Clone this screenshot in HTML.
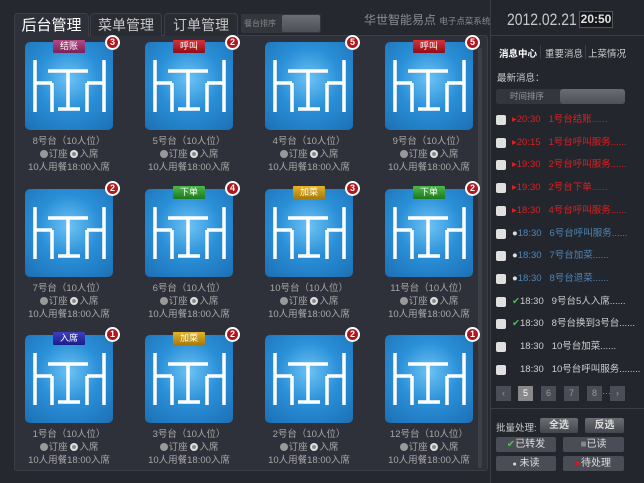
<!DOCTYPE html><html><head><meta charset="utf-8"><style>
*{margin:0;padding:0;box-sizing:border-box}
body{width:644px;height:483px;overflow:hidden;background:#26282f;font-family:"Liberation Sans","Noto Sans CJK SC",sans-serif;position:relative;color:#aaa}
.a{position:absolute}
.panel{left:14px;top:35px;width:474px;height:436px;background:#2e3139;border:1px solid #3c3f47;border-radius:3px}
.tab{top:13px;height:23px;font-size:14px;color:#c8c8c8;text-align:center;line-height:23px;background:#2a2c33;border:1px solid #3c3f47;border-bottom:none;border-radius:4px 4px 0 0}
.ic{width:88px;height:88px;border-radius:5px;background:radial-gradient(circle at 50% 42%,#6cc2f4 0%,#2a90d8 45%,#1c6fb4 100%)}
.lb{width:32px;height:13px;font-size:9px;color:#fff;text-align:center;line-height:13px;border-radius:1px}
.n{width:15px;height:15px;border-radius:50%;background:#b5141c;border:2px solid #fff;color:#fff;font-size:9px;font-weight:bold;text-align:center;line-height:11px}
.t{width:120px;text-align:center;font-size:9.5px;color:#a8a8a8;line-height:13px}
.dot{display:inline-block;width:8px;height:8px;border-radius:50%;background:#999;vertical-align:-1px;margin-right:1px}
.dot2{background:radial-gradient(circle,#888 30%,#ddd 40%)}
.right{left:490px;top:0;width:154px;height:483px;background:#23262d;border-left:1px solid #3a3d44}
.cb{width:10px;height:10px;background:#e0e0e0;border-radius:2px}
.m{font-size:9.5px;white-space:nowrap}
.red{color:#e01f1f}.blue{color:#4d86b8}.wh{color:#cfcfcf}
.pg{top:386px;width:15px;height:15px;background:#4a4d55;color:#999;font-size:9px;text-align:center;line-height:15px}
.bt{height:15px;background:linear-gradient(#6a6d73,#44474d);border-radius:2px;color:#ddd;font-size:10px;text-align:center;line-height:15px}
</style></head><body>
<div class="a panel"></div>
<div class="a tab" style="left:14px;width:75px;background:#2e3139;color:#fff;font-size:15px">后台管理</div>
<div class="a tab" style="left:90px;width:72px">菜单管理</div>
<div class="a tab" style="left:164px;width:74px">订单管理</div>
<div class="a" style="left:241px;top:14px;width:80px;height:19px;background:#33363d;border-radius:2px;font-size:8px;line-height:19px;padding-left:3px;color:#888">餐台排序</div>
<div class="a" style="left:282px;top:15px;width:38px;height:17px;background:linear-gradient(#6b6e74,#4c4f55);border-radius:2px"></div>
<div class="a" style="left:364px;top:11px;font-size:12px;color:#8a8d94;white-space:nowrap">华世智能易点 <span style="font-size:8.5px">电子点菜系统</span></div>
<div class="a" style="left:478px;top:48px;width:4px;height:420px;background:#3d4047;border-radius:2px"></div>
<svg width="0" height="0" style="position:absolute"><defs><g id="tb" stroke="#fff" stroke-width="3.5" fill="none"><path d="M10 18V70M10 41H27M27 41V70M23 29H63M43 29V67M33 67H55M79 18V70M62 41H79M62 41V70"/></g></defs></svg>

<div class="a" style="left:25px;top:42px"><div class="ic"><svg width="88" height="88"><use href="#tb"/></svg></div></div>
<div class="a" style="left:145px;top:42px"><div class="ic"><svg width="88" height="88"><use href="#tb"/></svg></div></div>
<div class="a" style="left:265px;top:42px"><div class="ic"><svg width="88" height="88"><use href="#tb"/></svg></div></div>
<div class="a" style="left:385px;top:42px"><div class="ic"><svg width="88" height="88"><use href="#tb"/></svg></div></div>
<div class="a" style="left:25px;top:189px"><div class="ic"><svg width="88" height="88"><use href="#tb"/></svg></div></div>
<div class="a" style="left:145px;top:189px"><div class="ic"><svg width="88" height="88"><use href="#tb"/></svg></div></div>
<div class="a" style="left:265px;top:189px"><div class="ic"><svg width="88" height="88"><use href="#tb"/></svg></div></div>
<div class="a" style="left:385px;top:189px"><div class="ic"><svg width="88" height="88"><use href="#tb"/></svg></div></div>
<div class="a" style="left:25px;top:335px"><div class="ic"><svg width="88" height="88"><use href="#tb"/></svg></div></div>
<div class="a" style="left:145px;top:335px"><div class="ic"><svg width="88" height="88"><use href="#tb"/></svg></div></div>
<div class="a" style="left:265px;top:335px"><div class="ic"><svg width="88" height="88"><use href="#tb"/></svg></div></div>
<div class="a" style="left:385px;top:335px"><div class="ic"><svg width="88" height="88"><use href="#tb"/></svg></div></div>

<div class="a lb" style="left:53px;top:40px;background:linear-gradient(#b44a86,#7a1f57)">结账</div>
<div class="a lb" style="left:173px;top:40px;background:linear-gradient(#d8303a,#8f0f18)">呼叫</div>
<div class="a lb" style="left:413px;top:40px;background:linear-gradient(#d8303a,#8f0f18)">呼叫</div>
<div class="a lb" style="left:173px;top:186px;background:linear-gradient(#4cb84a,#1d7a1c)">下单</div>
<div class="a lb" style="left:293px;top:186px;background:linear-gradient(#e4b52a,#a77a07)">加菜</div>
<div class="a lb" style="left:413px;top:186px;background:linear-gradient(#4cb84a,#1d7a1c)">下单</div>
<div class="a lb" style="left:53px;top:332px;background:linear-gradient(#3d3fc4,#1b1d86)">入席</div>
<div class="a lb" style="left:173px;top:332px;background:linear-gradient(#e4b52a,#a77a07)">加菜</div>

<div class="a n" style="left:105px;top:35px">3</div><div class="a n" style="left:225px;top:35px">2</div><div class="a n" style="left:345px;top:35px">5</div><div class="a n" style="left:465px;top:35px">5</div>
<div class="a n" style="left:105px;top:181px">2</div><div class="a n" style="left:225px;top:181px">4</div><div class="a n" style="left:345px;top:181px">3</div><div class="a n" style="left:465px;top:181px">2</div>
<div class="a n" style="left:105px;top:327px">1</div><div class="a n" style="left:225px;top:327px">2</div><div class="a n" style="left:345px;top:327px">2</div><div class="a n" style="left:465px;top:327px">1</div>

<div class="a t" style="left:9px;top:135px">8号台（10人位）<br><span class="dot"></span>订座 <span class="dot dot2"></span>入席<br>10人用餐18:00入席</div>
<div class="a t" style="left:129px;top:135px">5号台（10人位）<br><span class="dot"></span>订座 <span class="dot dot2"></span>入席<br>10人用餐18:00入席</div>
<div class="a t" style="left:249px;top:135px">4号台（10人位）<br><span class="dot"></span>订座 <span class="dot dot2"></span>入席<br>10人用餐18:00入席</div>
<div class="a t" style="left:369px;top:135px">9号台（10人位）<br><span class="dot"></span>订座 <span class="dot dot2"></span>入席<br>10人用餐18:00入席</div>
<div class="a t" style="left:9px;top:282px">7号台（10人位）<br><span class="dot"></span>订座 <span class="dot dot2"></span>入席<br>10人用餐18:00入席</div>
<div class="a t" style="left:129px;top:282px">6号台（10人位）<br><span class="dot"></span>订座 <span class="dot dot2"></span>入席<br>10人用餐18:00入席</div>
<div class="a t" style="left:249px;top:282px">10号台（10人位）<br><span class="dot"></span>订座 <span class="dot dot2"></span>入席<br>10人用餐18:00入席</div>
<div class="a t" style="left:369px;top:282px">11号台（10人位）<br><span class="dot"></span>订座 <span class="dot dot2"></span>入席<br>10人用餐18:00入席</div>
<div class="a t" style="left:9px;top:428px">1号台（10人位）<br><span class="dot"></span>订座 <span class="dot dot2"></span>入席<br>10人用餐18:00入席</div>
<div class="a t" style="left:129px;top:428px">3号台（10人位）<br><span class="dot"></span>订座 <span class="dot dot2"></span>入席<br>10人用餐18:00入席</div>
<div class="a t" style="left:249px;top:428px">2号台（10人位）<br><span class="dot"></span>订座 <span class="dot dot2"></span>入席<br>10人用餐18:00入席</div>
<div class="a t" style="left:369px;top:428px">12号台（10人位）<br><span class="dot"></span>订座 <span class="dot dot2"></span>入席<br>10人用餐18:00入席</div>

<div class="a right"></div>
<div class="a" style="left:507px;top:10px;font-size:17px;color:#c9c9c9;transform:scaleX(0.82);transform-origin:left">2012.02.21</div>
<div class="a" style="left:579px;top:11px;width:34px;height:17px;border:1px solid #555;background:#15171b;color:#e0e0e0;font-size:12px;font-weight:bold;text-align:center;line-height:15px">20:50</div>
<div class="a" style="left:491px;top:35px;width:153px;height:1px;background:#3c3f46"></div>
<div class="a" style="left:499px;top:46px;font-size:9.5px;color:#fff;font-weight:bold">消息中心</div>
<div class="a" style="left:540px;top:45px;width:1px;height:14px;background:#3c3f46"></div>
<div class="a" style="left:545px;top:46px;font-size:9.5px;color:#ccc">重要消息</div>
<div class="a" style="left:585px;top:45px;width:1px;height:14px;background:#3c3f46"></div>
<div class="a" style="left:588px;top:46px;font-size:9.5px;color:#ccc">上菜情况</div>
<div class="a" style="left:497px;top:70px;font-size:9.5px;color:#ccc">最新消息：</div>
<div class="a" style="left:496px;top:89px;width:129px;height:15px;background:#33363d;border-radius:3px;font-size:8.5px;color:#999;line-height:15px;padding-left:14px">时间排序</div>
<div class="a" style="left:560px;top:89px;width:65px;height:15px;background:linear-gradient(#6a6d73,#4d5056);border-radius:3px"></div>

<div class="a" style="left:496px;top:109px;line-height:22.7px">
<div class="m red"><span class="a cb" style="left:0;margin-top:6px"></span><span style="margin-left:16px">▸20:30&nbsp;&nbsp; 1号台结账......</span></div>
<div class="m red"><span class="a cb" style="left:0;margin-top:6px"></span><span style="margin-left:16px">▸20:15&nbsp;&nbsp; 1号台呼叫服务......</span></div>
<div class="m red"><span class="a cb" style="left:0;margin-top:6px"></span><span style="margin-left:16px">▸19:30&nbsp;&nbsp; 2号台呼叫服务......</span></div>
<div class="m red"><span class="a cb" style="left:0;margin-top:6px"></span><span style="margin-left:16px">▸19:30&nbsp;&nbsp; 2号台下单......</span></div>
<div class="m red"><span class="a cb" style="left:0;margin-top:6px"></span><span style="margin-left:16px">▸18:30&nbsp;&nbsp; 4号台呼叫服务......</span></div>
<div class="m blue"><span class="a cb" style="left:0;margin-top:6px"></span><span style="margin-left:16px"><span style="color:#ddd">●</span>18:30&nbsp;&nbsp; 6号台呼叫服务......</span></div>
<div class="m blue"><span class="a cb" style="left:0;margin-top:6px"></span><span style="margin-left:16px"><span style="color:#ddd">●</span>18:30&nbsp;&nbsp; 7号台加菜......</span></div>
<div class="m blue"><span class="a cb" style="left:0;margin-top:6px"></span><span style="margin-left:16px"><span style="color:#ddd">●</span>18:30&nbsp;&nbsp; 8号台退菜......</span></div>
<div class="m wh"><span class="a cb" style="left:0;margin-top:6px"></span><span style="margin-left:16px"><span style="color:#4ec34e">✔</span>18:30&nbsp;&nbsp; 9号台5人入席......</span></div>
<div class="m wh"><span class="a cb" style="left:0;margin-top:6px"></span><span style="margin-left:16px"><span style="color:#4ec34e">✔</span>18:30&nbsp;&nbsp; 8号台换到3号台......</span></div>
<div class="m wh"><span class="a cb" style="left:0;margin-top:6px"></span><span style="margin-left:24px">18:30&nbsp;&nbsp; 10号台加菜......</span></div>
<div class="m wh"><span class="a cb" style="left:0;margin-top:6px"></span><span style="margin-left:24px">18:30&nbsp;&nbsp; 10号台呼叫服务........</span></div>
</div>

<div class="a pg" style="left:496px">‹</div>
<div class="a pg" style="left:518px;background:#888;color:#fff">5</div>
<div class="a pg" style="left:541px">6</div>
<div class="a pg" style="left:564px">7</div>
<div class="a pg" style="left:587px">8</div>
<div class="a" style="left:602px;top:386px;font-size:9px;color:#999">…</div>
<div class="a pg" style="left:610px">›</div>
<div class="a" style="left:491px;top:408px;width:153px;height:1px;background:#3c3f46"></div>
<div class="a" style="left:496px;top:420px;font-size:9.5px;color:#ccc">批量处理:</div>
<div class="a bt" style="left:540px;top:418px;width:38px;font-weight:bold">全选</div>
<div class="a bt" style="left:585px;top:418px;width:39px;font-weight:bold">反选</div>
<div class="a bt" style="left:496px;top:437px;width:60px;background:#4a4d55"><span style="color:#4ec34e">✔</span>已转发</div>
<div class="a bt" style="left:563px;top:437px;width:61px;background:#4a4d55"><span style="color:#888">■</span>已读</div>
<div class="a bt" style="left:496px;top:456px;width:60px;background:#4a4d55"><span style="font-size:7px">●</span> 未读</div>
<div class="a bt" style="left:563px;top:456px;width:61px;background:#4a4d55"><span style="color:#e01818">▸</span>待处理</div>
</body></html>
